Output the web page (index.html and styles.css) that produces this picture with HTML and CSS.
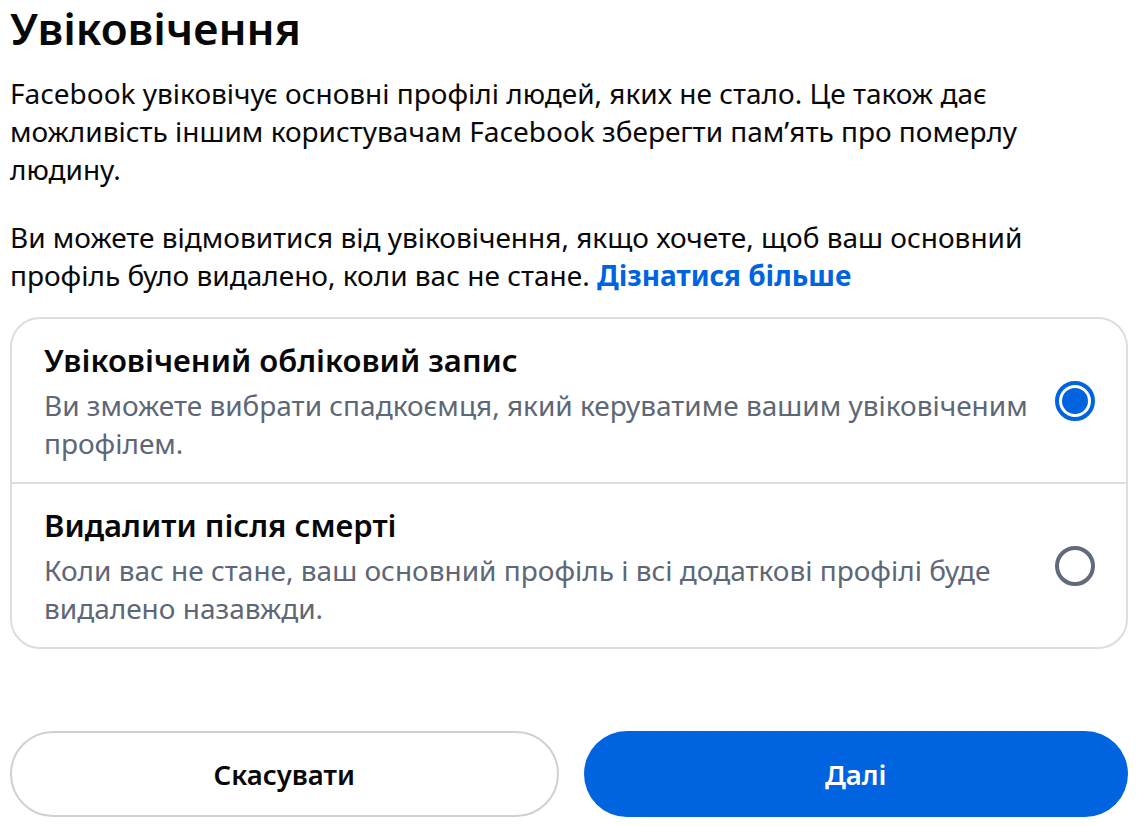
FILE: index.html
```html
<!DOCTYPE html>
<html lang="uk">
  <head>
    <meta charset="UTF-8" />
    <title>Увіковічення</title>
    <link rel="stylesheet" href="styles.css">
  </head>
  <body>
    <div class="dialog">
      <h1 class="title">Увіковічення</h1>
      <p class="text">
        Facebook увіковічує основні профілі людей, яких не стало. Це також дає
        можливість іншим користувачам Facebook зберегти пам’ять про померлу
        людину.
      </p>
      <p class="text">
        Ви можете відмовитися від увіковічення, якщо хочете, щоб ваш основний
        профіль було видалено, коли вас не стане.
        <a href="#" class="link">Дізнатися більше</a>
      </p>

      <div class="options">
        <label class="option">
          <div class="option-body">
            <div class="option-title">Увіковічений обліковий запис</div>
            <div class="option-desc">
              Ви зможете вибрати спадкоємця, який керуватиме вашим увіковіченим
              профілем.
            </div>
          </div>
          <span class="radio checked"></span>
        </label>
        <label class="option">
          <div class="option-body">
            <div class="option-title">Видалити після смерті</div>
            <div class="option-desc">
              Коли вас не стане, ваш основний профіль і всі додаткові профілі
              буде видалено назавжди.
            </div>
          </div>
          <span class="radio"></span>
        </label>
      </div>

      <div class="actions">
        <button class="btn btn-secondary">Скасувати</button>
        <button class="btn btn-primary">Далі</button>
      </div>
    </div>
  </body>
</html>
```

FILE: styles.css
```css
:root {
  --text-primary: #080809;
  --text-secondary: #5d6775;
  --accent: #0064e0;
  --divider: #dadde1;
  --font: 'Noto Sans', 'Open Sans', sans-serif;
}
* {
  box-sizing: border-box;
}
html,
body {
  margin: 0;
  padding: 0;
  background: #fff;
  color: var(--text-primary);
  font-family: var(--font);
}
.dialog {
  width: 1143px;
  padding: 0 15px 0 10px;
}
.title {
  margin: 0;
  padding-top: 2px;
  font-size: 44px;
  font-weight: 600;
  line-height: 52px;
}
.text {
  margin: 20px 0 0;
  font-size: 28px;
  line-height: 38px;
}
.text + .text {
  margin-top: 30px;
}
.link {
  color: var(--accent);
  font-weight: 700;
  text-decoration: none;
}
.options {
  margin-top: 23px;
  border: 2px solid var(--divider);
  border-radius: 30px;
  overflow: hidden;
}
.option {
  display: flex;
  align-items: center;
  gap: 10px;
  padding: 21px 31px 20px 32px;
  cursor: pointer;
}
.option + .option {
  border-top: 2px solid var(--divider);
}
.option-body {
  flex: 1;
}
.option-title {
  font-size: 31px;
  font-weight: 600;
  line-height: 40px;
}
.option-desc {
  margin-top: 6px;
  font-size: 28px;
  line-height: 38px;
  color: var(--text-secondary);
}
.radio {
  flex: none;
  width: 40px;
  height: 40px;
  border: 4px solid #5f6b79;
  border-radius: 50%;
  position: relative;
}
.radio.checked {
  border-color: var(--accent);
}
.radio.checked::after {
  content: '';
  position: absolute;
  left: 3px;
  top: 3px;
  width: 26px;
  height: 26px;
  border-radius: 50%;
  background: var(--accent);
}
.actions {
  display: flex;
  gap: 25px;
  margin-top: 82px;
}
.btn {
  flex: 1;
  height: 86px;
  border-radius: 43px;
  font-family: var(--font);
  font-size: 27.5px;
  font-weight: 600;
  cursor: pointer;
}
.btn-secondary {
  background: #fff;
  border: 2px solid #ced0d4;
  color: var(--text-primary);
}
.btn-primary {
  background: var(--accent);
  border: none;
  color: #fff;
}
```
